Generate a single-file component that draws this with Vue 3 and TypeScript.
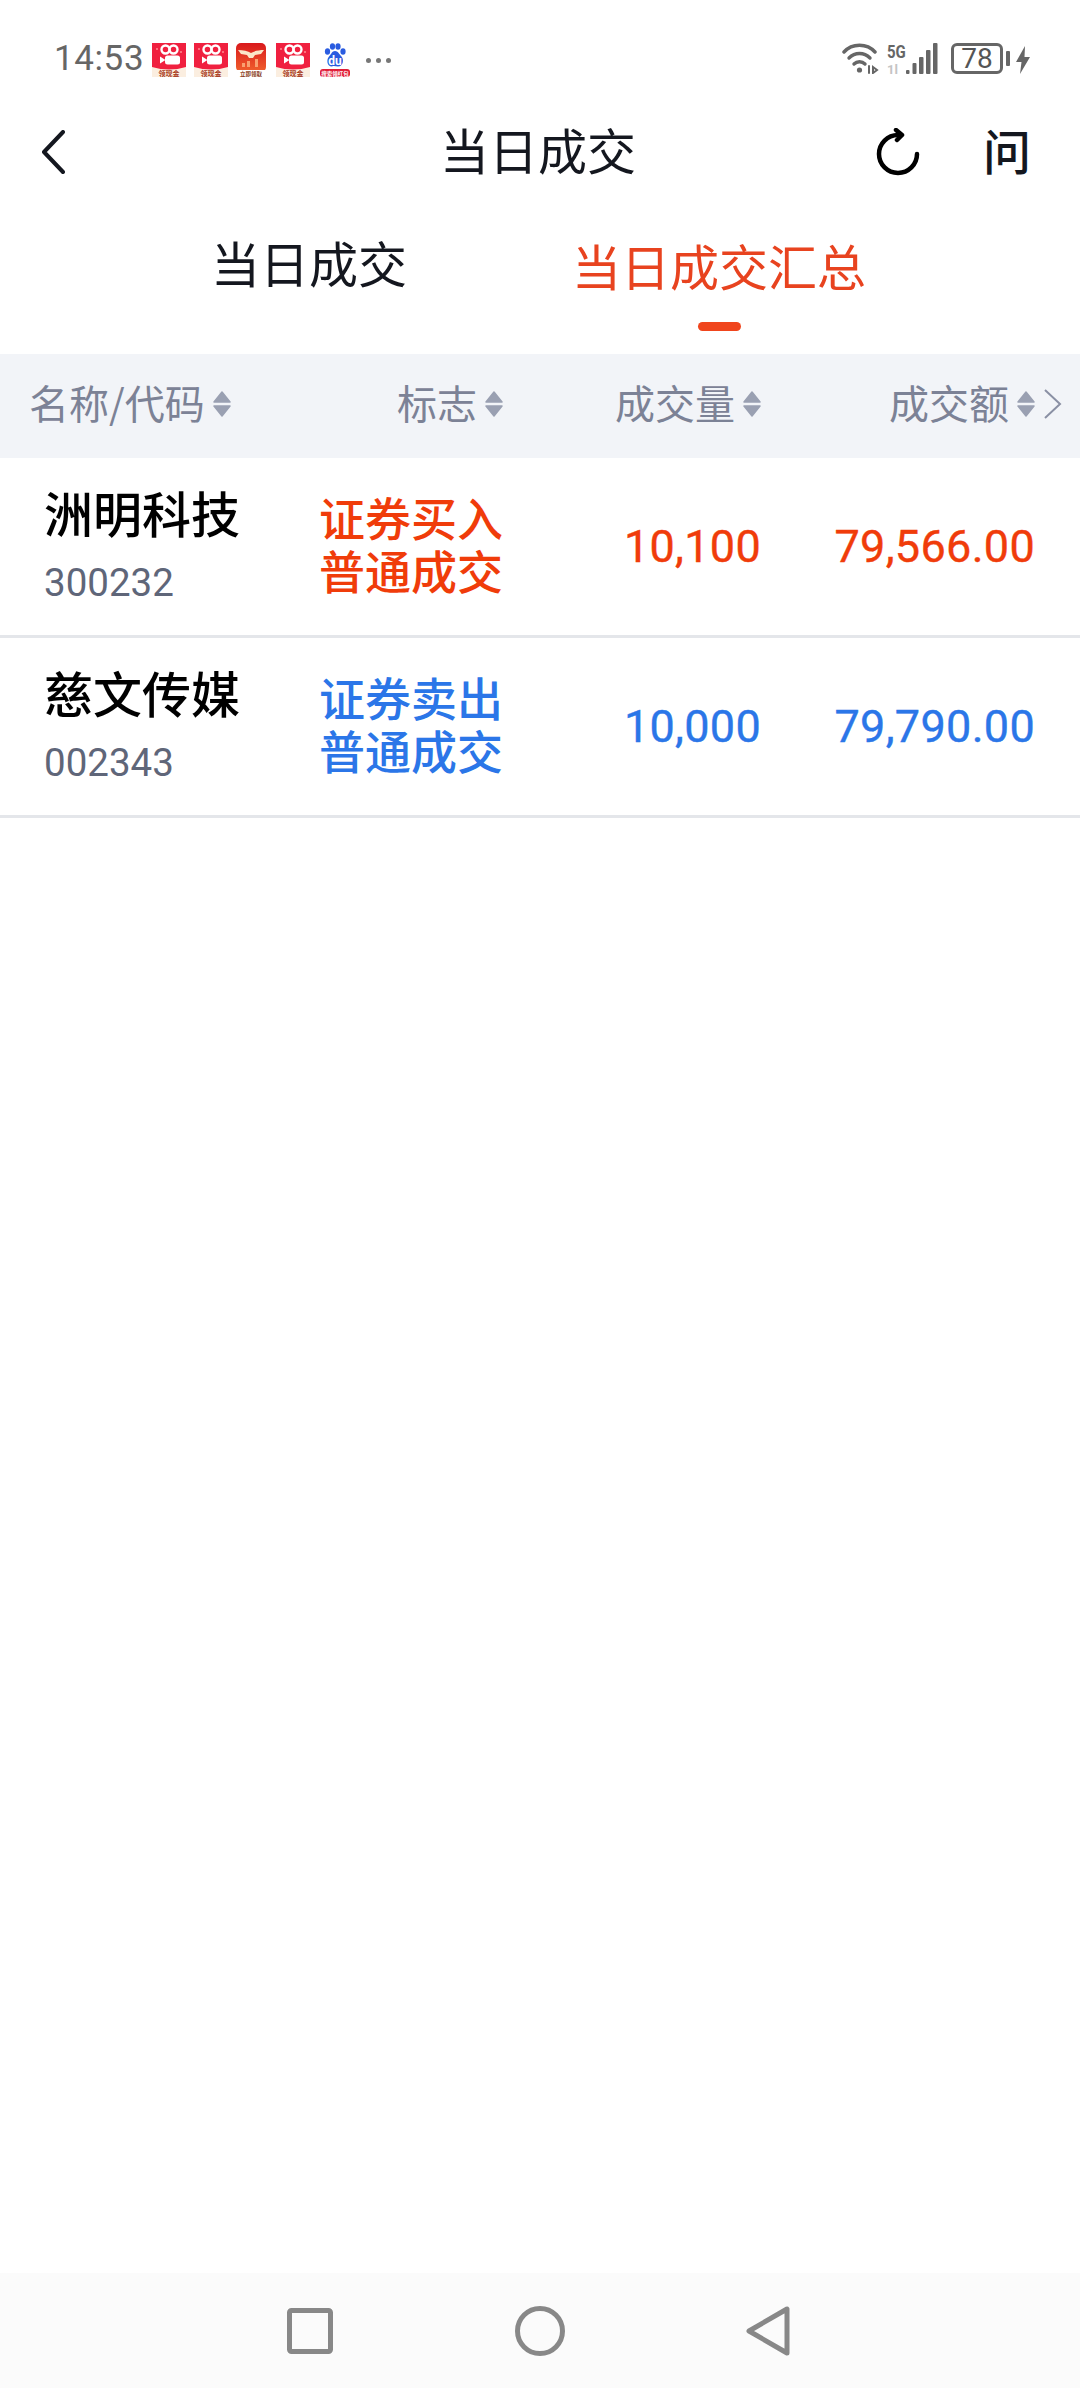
<script setup lang="ts">
interface Row {
  name: string;
  code: string;
  flag: string[];
  qty: string;
  amount: string;
  tone: "buy" | "sell";
}

const columns: string[] = ["名称/代码", "标志", "成交量", "成交额"];

const rows: Row[] = [
  { name: "洲明科技", code: "300232", flag: ["证券买入", "普通成交"], qty: "10,100", amount: "79,566.00", tone: "buy" },
  { name: "慈文传媒", code: "002343", flag: ["证券卖出", "普通成交"], qty: "10,000", amount: "79,790.00", tone: "sell" },
];

const couponSlots: number[] = [0, 1];
</script>

<template>
  <div class="page">
    <div class="status">
      <span class="time">14:53</span>
      <svg v-for="i in couponSlots" :key="i" class="note" width="34" height="34" viewBox="0 0 34 34">
        <rect width="34" height="34" fill="#fbeee0" />
        <path d="M0 0h34v24q-17 5-34 0z" fill="#f0203f" />
        <circle cx="13.500" cy="6.500" r="4" fill="none" stroke="#fff" stroke-width="2.400" />
        <circle cx="21.500" cy="6.500" r="4" fill="none" stroke="#fff" stroke-width="2.400" />
        <rect x="13" y="12.500" width="15" height="9" rx="2.500" fill="#fff" />
        <path d="M13.500 17 8 13.500v7z" fill="#fff" />
        <circle cx="5" cy="6" r="1" fill="#ff8a90" />
        <circle cx="29" cy="9" r="1" fill="#ff8a90" />
        <text x="17" y="32.500" class="tiny" fill="#a83a20">领现金</text>
      </svg>
      <svg class="note wing" width="30" height="34" viewBox="0 0 30 34">
        <defs>
          <linearGradient id="wingBg" x1="0" y1="0" x2="0" y2="1">
            <stop offset="0" stop-color="#d9181c" />
            <stop offset="1" stop-color="#f0602c" />
          </linearGradient>
        </defs>
        <rect width="30" height="29" rx="5" fill="url(#wingBg)" />
        <path d="M2 7c5 0 10 1 13 3 3-2 8-3 13-3l-3 4-6 1-2 3h-4l-2-3-6-1z" fill="#fbe6c8" />
        <path d="M6 24v-4h3v4zM11 24v-6h3v6zM19 24v-8h3v8z" fill="#f9a070" />
        <rect y="27" width="30" height="7" fill="#fff" />
        <text x="15" y="33" class="tiny narrow" fill="#8a3a20">立即领取</text>
      </svg>
      <svg class="note" width="34" height="34" viewBox="0 0 34 34">
        <rect width="34" height="34" fill="#fbeee0" />
        <path d="M0 0h34v24q-17 5-34 0z" fill="#f0203f" />
        <circle cx="13.500" cy="6.500" r="4" fill="none" stroke="#fff" stroke-width="2.400" />
        <circle cx="21.500" cy="6.500" r="4" fill="none" stroke="#fff" stroke-width="2.400" />
        <rect x="13" y="12.500" width="15" height="9" rx="2.500" fill="#fff" />
        <path d="M13.500 17 8 13.500v7z" fill="#fff" />
        <circle cx="5" cy="6" r="1" fill="#ff8a90" />
        <circle cx="29" cy="9" r="1" fill="#ff8a90" />
        <text x="17" y="32.500" class="tiny" fill="#a83a20">领现金</text>
      </svg>
      <svg class="note baidu" width="30" height="34" viewBox="0 0 30 34">
        <ellipse cx="7.500" cy="8.500" rx="2.600" ry="3.200" fill="#2a5ce0" />
        <ellipse cx="12.500" cy="3.500" rx="2.600" ry="3.200" fill="#2a5ce0" />
        <ellipse cx="18" cy="3.500" rx="2.600" ry="3.200" fill="#2a5ce0" />
        <ellipse cx="23" cy="8.500" rx="2.600" ry="3.200" fill="#2a5ce0" />
        <path d="M15 8c3 0 4 3 6.500 5.500s2 10-3.500 10c-2 0-4-1-6 0-5.500 0-5.500-7.500-3-10S12 8 15 8z" fill="#2a5ce0" />
        <text x="15" y="22" class="du" fill="#fff">du</text>
        <rect y="26" width="30" height="8" rx="3" fill="#e11d38" />
        <text x="15" y="32.500" class="tiny narrow" fill="#fff">搜索领红包</text>
      </svg>
      <span class="dots"><i></i><i></i><i></i></span>

      <div class="sys">
        <svg width="37" height="31" viewBox="0 0 37 31" fill="none" stroke="#666" stroke-width="3.400" stroke-linecap="round">
          <path d="M2 9C10 0 25 0 33 9" />
          <path d="M7 15c6-6 15-6 21 0" />
          <path d="M12 21c3-3 8-3 11 0" />
          <circle cx="17.500" cy="27" r="2.600" fill="#666" stroke="none" />
          <path d="M27 23v7M31 24l4 3-4 3z" stroke-width="2" />
        </svg>
        <div class="net">
          <span class="fiveg">5G</span>
          <span class="onel">1l</span>
        </div>
        <svg class="bars" width="32" height="31" viewBox="0 0 32 31" fill="#666">
          <rect x="0" y="27" width="3.500" height="4" rx="1" />
          <rect x="6.500" y="20" width="4" height="11" rx="1" />
          <rect x="13" y="14" width="4.500" height="17" rx="1" />
          <rect x="20" y="7" width="4.500" height="24" rx="1" />
          <rect x="27" y="0" width="4.500" height="31" rx="1" />
        </svg>
        <div class="battery">78</div>
        <span class="nub"></span>
        <svg class="bolt" width="14" height="28" viewBox="0 0 14 28" fill="#666">
          <path d="M9 0 0 16h5.500L4 28l10-17H8.500z" />
        </svg>
      </div>
    </div>

    <div class="topbar">
      <svg width="24" height="44" viewBox="0 0 24 44" fill="none" stroke="#14171f" stroke-width="4" stroke-linecap="round" stroke-linejoin="round">
        <path d="M22 2 3 22l19 20" />
      </svg>
      <h1 class="title">当日成交</h1>
      <svg class="refresh" width="44" height="48" viewBox="0 0 44 48" fill="none" stroke="#000" stroke-width="4.500" stroke-linecap="round" stroke-linejoin="round">
        <path d="M41 26a19 19 0 1 1-19-19h3" />
        <path d="M20 2l6 5-5 5" />
      </svg>
      <span class="ask">问</span>
    </div>

    <div class="tabs">
      <div class="tab">当日成交</div>
      <div class="tab active">当日成交汇总</div>
    </div>

    <div class="thead">
      <div v-for="c in columns" :key="c" class="th">
        <span class="th-label">{{ c }}</span>
        <svg width="18" height="26" viewBox="0 0 18 26" fill="#9aa0b2" stroke="#9aa0b2" stroke-width="1.500" stroke-linejoin="round">
          <path d="M9 1l8 10H1zM9 25 1 15h16z" />
        </svg>
      </div>
      <svg class="more" width="18" height="30" viewBox="0 0 18 30" fill="none" stroke="#8a90a4" stroke-width="2">
        <path d="M1 1l15 14L1 29" />
      </svg>
    </div>

    <div v-for="r in rows" :key="r.code" class="row" :class="r.tone">
      <div class="stock">
        <div class="name">{{ r.name }}</div>
        <div class="code">{{ r.code }}</div>
      </div>
      <div class="flag">
        <div v-for="f in r.flag" :key="f">{{ f }}</div>
      </div>
      <div class="num">{{ r.qty }}</div>
      <div class="num">{{ r.amount }}</div>
    </div>

    <div class="spacer"></div>

    <div class="navbar">
      <svg width="46" height="46" viewBox="0 0 46 46" fill="none" stroke="#888" stroke-width="5">
        <rect x="2.500" y="2.500" width="41" height="41" rx="2" />
      </svg>
      <svg width="50" height="50" viewBox="0 0 50 50" fill="none" stroke="#888" stroke-width="5">
        <circle cx="25" cy="25" r="22.500" />
      </svg>
      <svg width="44" height="50" viewBox="0 0 44 50" fill="none" stroke="#888" stroke-width="5" stroke-linejoin="round">
        <path d="M41 3v44L3 25z" />
      </svg>
    </div>
  </div>
</template>

<style>
html,
body {
  margin: 0;
  background: #fff;
}
</style>

<style scoped>
.page {
  width: 1080px;
  height: 2388px;
  display: flex;
  flex-direction: column;
  background: #fff;
  font-family: "Noto Sans CJK SC", Roboto, sans-serif;
  overflow: hidden;
}

.status {
  height: 116px;
  box-sizing: border-box;
  padding: 43px 50px 0 54px;
  display: flex;
  align-items: flex-start;
  color: #666;
}
.time {
  font-family: Roboto, sans-serif;
  font-size: 35px;
  line-height: 32px;
  letter-spacing: 0.6px;
  margin-right: 8px;
  color: #666;
}
.note {
  margin-right: 8px;
  flex: none;
}
.note.wing {
  margin-right: 10px;
}
.note.baidu {
  margin-left: 2px;
}
.tiny {
  font-size: 7px;
  text-anchor: middle;
  font-weight: 700;
}
.tiny.narrow {
  font-size: 5.500px;
}
.du {
  font-size: 12px;
  font-weight: 700;
  text-anchor: middle;
  font-family: Roboto, sans-serif;
}
.dots {
  display: flex;
  gap: 5px;
  margin: 15px 0 0 8px;
}
.dots i {
  width: 5px;
  height: 5px;
  border-radius: 50%;
  background: #777;
}
.sys {
  margin-left: auto;
  display: flex;
  align-items: flex-start;
}
.net {
  width: 18px;
  margin-left: 8px;
  display: flex;
  flex-direction: column;
  font-family: Roboto, sans-serif;
  font-weight: 700;
}
.fiveg {
  font-size: 15px;
  line-height: 15px;
  color: #666;
  transform: scaleY(1.250);
  transform-origin: top left;
  height: 21px;
}
.onel {
  font-size: 13px;
  line-height: 12px;
  color: #c4c4c4;
}
.bars {
  flex: none;
  margin-left: 1px;
}
.battery {
  width: 52px;
  height: 31px;
  margin-left: 13px;
  box-sizing: border-box;
  border: 3px solid #666;
  border-radius: 6px;
  font-family: Roboto, sans-serif;
  font-size: 28px;
  line-height: 25px;
  text-align: center;
  color: #555;
}
.nub {
  width: 4px;
  height: 15px;
  margin: 8px 6px 0 3px;
  background: #666;
  border-radius: 1px;
}
.bolt {
  margin-top: 3px;
}

.topbar {
  height: 72px;
  box-sizing: border-box;
  padding: 0 49px 0 41px;
  display: flex;
  align-items: center;
  color: #14171f;
}
.title {
  margin: 0 0 0 375px;
  padding-bottom: 6px;
  font-size: 49px;
  font-weight: 400;
  line-height: 60px;
}
.refresh {
  margin-left: auto;
  margin-right: 63px;
}
.ask {
  padding-bottom: 6px;
  font-size: 48px;
  font-weight: 500;
  line-height: 60px;
}

.tabs {
  height: 166px;
  box-sizing: border-box;
  padding: 44px 0 0 211px;
  display: flex;
  align-items: flex-start;
  gap: 165px;
}
.tab {
  position: relative;
  font-size: 49px;
  line-height: 60px;
  color: #14171f;
  height: 60px;
}
.tab.active {
  margin-top: 3px;
  color: #e8431f;
}
.tab.active::after {
  content: "";
  position: absolute;
  left: 126px;
  top: 87px;
  width: 43px;
  height: 9px;
  border-radius: 5px;
  background: #f0451d;
}

.thead {
  height: 104px;
  box-sizing: border-box;
  padding: 0 0 4px 29px;
  background: #f2f4f8;
  display: grid;
  grid-template-columns: 368px 218px 274px 155px 18px;
  align-items: center;
  color: #7c8296;
}
.th {
  display: flex;
  align-items: center;
  gap: 8px;
  font-size: 40px;
  line-height: 50px;
}
.th-label {
  padding-bottom: 4px;
}
.more {
  display: block;
}

.row {
  height: 180px;
  box-sizing: border-box;
  border-bottom: 3px solid #e4e6ea;
  padding-left: 44px;
  display: grid;
  grid-template-columns: 276px 182px 259px 274px;
  align-items: center;
}
.row.buy {
  color: #f03c0a;
}
.row.sell {
  color: #2b76e8;
}
.stock {
  padding-bottom: 4px;
}
.name {
  font-size: 49px;
  font-weight: 500;
  line-height: 60px;
  color: #000;
  margin-bottom: 16px;
}
.code {
  font-family: Roboto, sans-serif;
  font-size: 38.500px;
  line-height: 50px;
  color: #5f6679;
}
.flag {
  margin-left: -1px;
  padding-bottom: 8px;
  font-size: 46px;
  line-height: 53px;
  font-weight: 500;
  white-space: nowrap;
}
.num {
  font-family: Roboto, sans-serif;
  font-size: 45px;
  font-weight: 400;
  letter-spacing: 0.3px;
  -webkit-text-stroke: 0.4px currentColor;
  line-height: 54px;
  text-align: right;
}

.spacer {
  flex: 1;
}

.navbar {
  height: 115px;
  box-sizing: border-box;
  padding: 0 290px 0 287px;
  background: #fbfbfb;
  display: flex;
  align-items: center;
  justify-content: space-between;
}
</style>
